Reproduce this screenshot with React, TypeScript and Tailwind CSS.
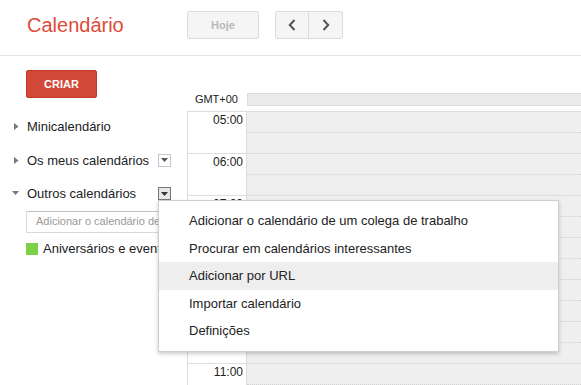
import React from "react";

const hours = ["05:00", "06:00", "07:00", "08:00", "09:00", "10:00", "11:00"];

const menuItems = [
  "Adicionar o calendário de um colega de trabalho",
  "Procurar em calendários interessantes",
  "Adicionar por URL",
  "Importar calendário",
  "Definições",
];

const RightArrow = () => (
  <svg width="5" height="7" viewBox="0 0 5 7" className="shrink-0">
    <path d="M0 0 L4.5 3.5 L0 7 Z" fill="#777" />
  </svg>
);

const DownArrow = () => (
  <svg width="7" height="5" viewBox="0 0 7 5" className="shrink-0">
    <path d="M0 0 L7 0 L3.5 4 Z" fill="#777" />
  </svg>
);

const DropBox = ({ active }: { active?: boolean }) => (
  <div
    className={
      active
        ? "w-[13px] h-[13px] border border-[#777] bg-[#e6e6e6] flex items-center justify-center"
        : "w-[13px] h-[13px] border border-[#c6c6c6] bg-white flex items-center justify-center"
    }
  >
    <svg width="7" height="4" viewBox="0 0 7 4">
      <path d="M0 0 L7 0 L3.5 4 Z" fill={active ? "#333" : "#555"} />
    </svg>
  </div>
);

const App: React.FC = () => {
  return (
    <div className="relative w-[581px] h-[385px] overflow-hidden bg-white font-['Liberation_Sans',Arial,sans-serif] text-[#222]">
      {/* header */}
      <div className="flex items-start h-[56px] pt-[11px] border-b border-[#e5e5e5]">
        <div className="w-[187px] pl-[27px] mt-[3px] text-[20px] leading-[23px] text-[#dd4b39]">
          Calendário
        </div>
        <div className="w-[72px] h-[28px] flex items-center justify-center bg-[#f5f5f5] border border-[#dcdcdc] rounded-[2px] text-[11px] font-bold text-[#b8b8b8]">
          Hoje
        </div>
        <div className="ml-[16px] flex h-[28px] border border-[#dcdcdc] rounded-[2px] bg-[#f5f5f5]">
          <div className="w-[33px] flex items-center justify-center border-r border-[#dcdcdc]">
            <svg width="8" height="12" viewBox="0 0 8 12">
              <path d="M6.5 1 L1.8 6 L6.5 11" fill="none" stroke="#555" strokeWidth="2" />
            </svg>
          </div>
          <div className="w-[33px] flex items-center justify-center">
            <svg width="8" height="12" viewBox="0 0 8 12">
              <path d="M1.5 1 L6.2 6 L1.5 11" fill="none" stroke="#555" strokeWidth="2" />
            </svg>
          </div>
        </div>
      </div>

      <div className="flex">
        {/* sidebar */}
        <div className="w-[187px] shrink-0 pl-[12px] pr-[16px]">
          <div className="ml-[14px] mt-[14px] w-[71px] h-[28px] flex items-center justify-center bg-[#d14836] border border-[#c53727] rounded-[2px] text-white text-[11px] font-bold">
            CRIAR
          </div>
          <div className="mt-[12px]">
            <div className="h-[33.5px] flex items-center">
              <div className="w-[15px] pl-[2px]">
                <RightArrow />
              </div>
              <span className="text-[13px]">Minicalendário</span>
            </div>
            <div className="h-[33.5px] flex items-center">
              <div className="w-[15px] pl-[2px]">
                <RightArrow />
              </div>
              <span className="text-[13px] flex-1">Os meus calendários</span>
              <DropBox />
            </div>
            <div className="h-[33.5px] flex items-center">
              <div className="w-[15px]">
                <DownArrow />
              </div>
              <span className="text-[13px] flex-1">Outros calendários</span>
              <DropBox active />
            </div>
          </div>
          <div className="ml-[14px] w-[150px] h-[22px] border border-[#d9d9d9] border-t-[#c0c0c0] flex items-center pl-[9px] text-[11px] text-[#999] whitespace-nowrap overflow-hidden">
            Adicionar o calendário de um colega
          </div>
          <div className="ml-[14px] mt-[10px] flex items-center h-[13px] whitespace-nowrap">
            <div className="w-[12px] h-[12px] bg-[#7bd148] shrink-0" />
            <span className="ml-[5px] text-[13px]">Aniversários e eventos</span>
          </div>
        </div>

        {/* grid */}
        <div className="flex-1 flex flex-col">
          <div className="mt-[37px] flex items-center">
            <div className="w-[60px] pr-[9px] text-right text-[11px] leading-[13px] text-[#222]">
              GMT+00
            </div>
            <div className="flex-1 h-[13px] bg-[#ebebeb] border border-[#dddddd] border-r-0" />
          </div>
          <div className="mt-[5px] border-l border-[#dddddd]">
            {hours.map((h) => (
              <div key={h} className="flex h-[42px] border-t border-[#dddddd]">
                <div className="w-[59px] border-r border-[#dddddd] text-right pr-[3px] text-[12px] leading-[14px] pt-[1px] text-[#222]">
                  {h}
                </div>
                <div className="flex-1 bg-[#efefef] flex flex-col">
                  <div className="h-[20px]" />
                  <div className="border-t border-dotted border-[#d2d2d2]" />
                </div>
              </div>
            ))}
          </div>
        </div>
      </div>

      {/* dropdown menu */}
      <div className="absolute left-[158px] top-[200px] w-[401px] py-[6px] bg-white border border-[#cfcfcf] shadow-[0_2px_4px_rgba(0,0,0,0.2)]">
        {menuItems.map((item, i) => (
          <div
            key={item}
            className={
              i === 2
                ? "h-[27.5px] flex items-center pl-[30px] text-[13px] text-[#222] bg-[#eeeeee]"
                : "h-[27.5px] flex items-center pl-[30px] text-[13px] text-[#222]"
            }
          >
            {item}
          </div>
        ))}
      </div>
    </div>
  );
};

export default App;
